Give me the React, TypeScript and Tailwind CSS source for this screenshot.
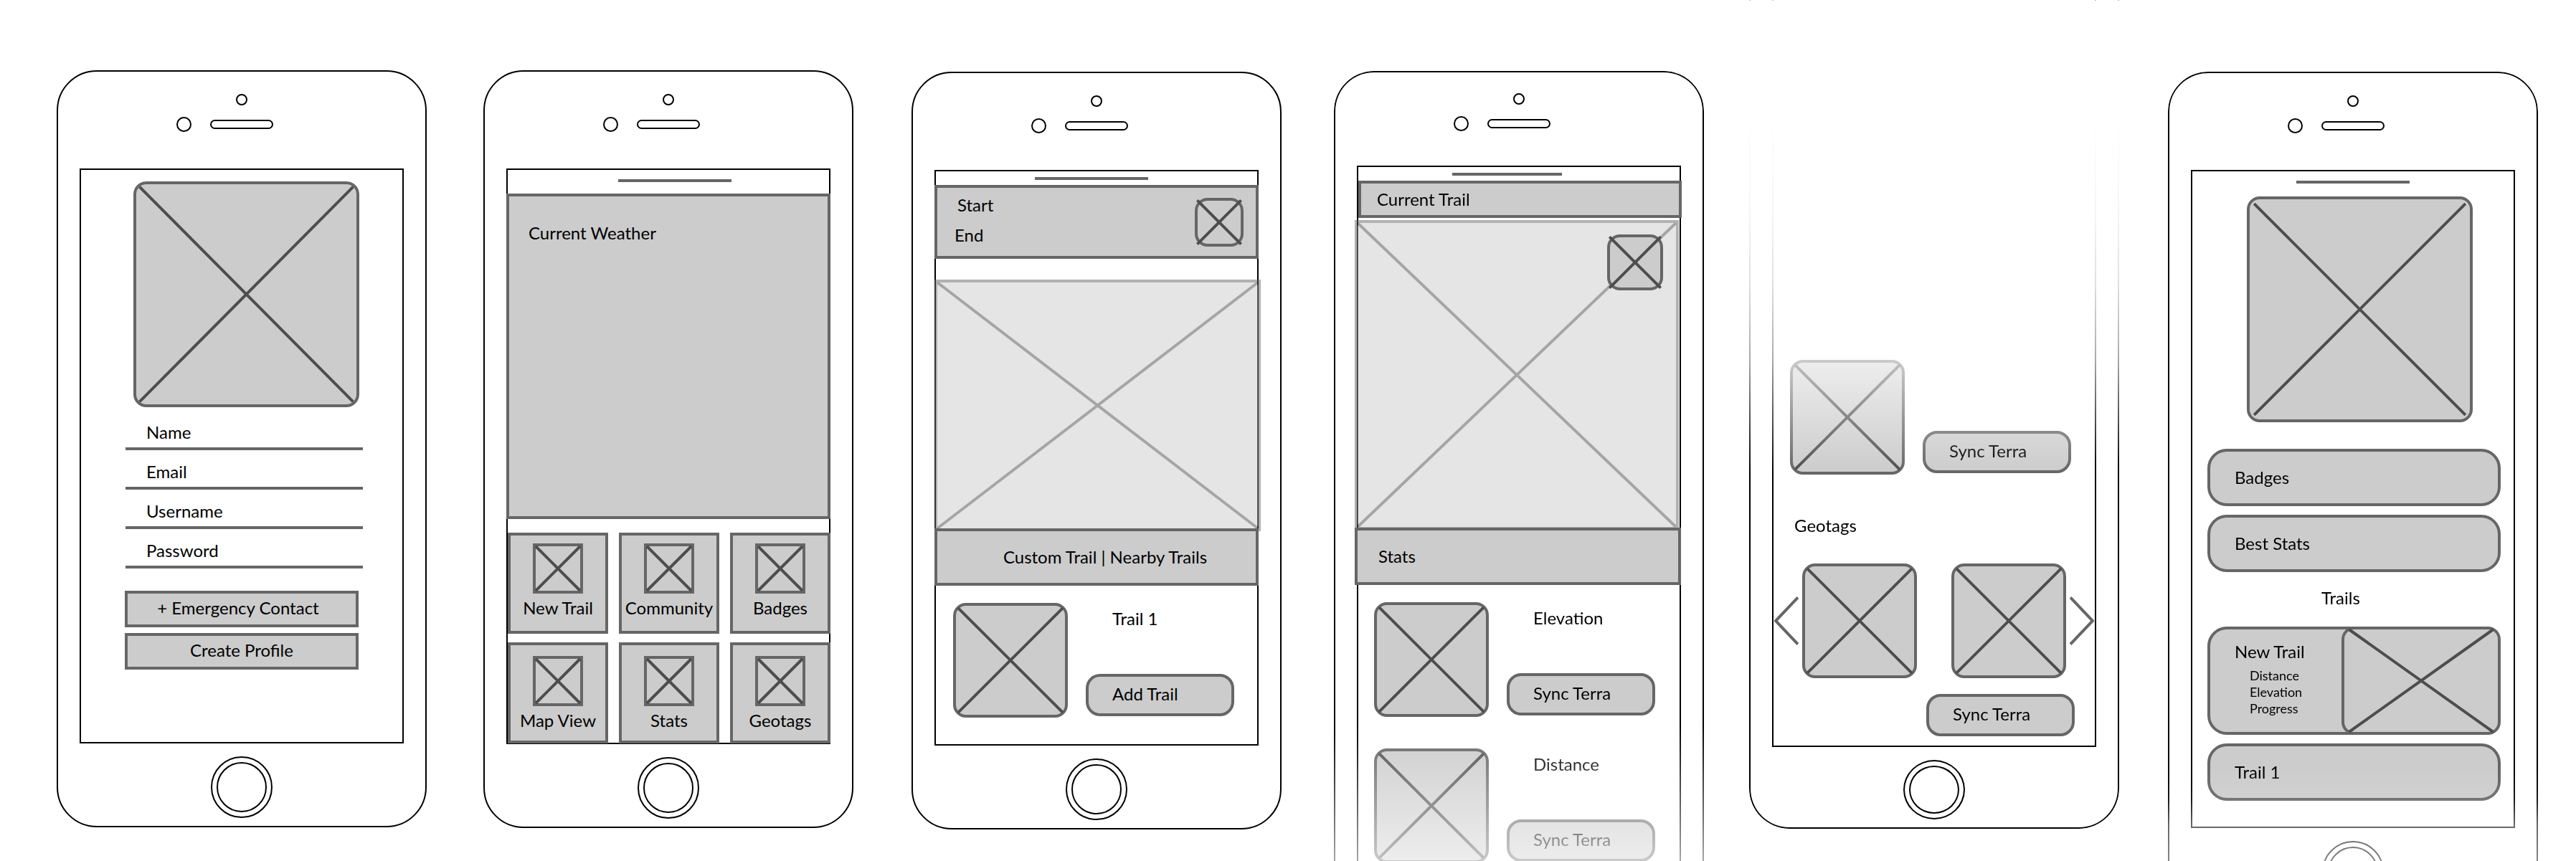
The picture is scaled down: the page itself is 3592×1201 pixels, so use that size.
import type { ReactNode } from "react";

type CrossProps = { dx?: number; dy?: number };

function Cross({ dx = 2, dy = 2 }: CrossProps) {
  return (
    <svg
      className="absolute inset-0 h-full w-full overflow-visible"
      viewBox="0 0 100 100"
      preserveAspectRatio="none"
      fill="none"
      stroke="#4d4d4d"
      strokeWidth="4"
      aria-hidden="true"
    >
      <path vectorEffect="non-scaling-stroke" d={`M${dx} ${dy}L${100 - dx} ${100 - dy}`} />
      <path vectorEffect="non-scaling-stroke" d={`M${100 - dx} ${dy}L${dx} ${100 - dy}`} />
    </svg>
  );
}

function Placeholder({ className, dx, dy }: CrossProps & { className: string }) {
  return (
    <div className={`relative border-4 border-[#666] bg-[#ccc] ${className}`}>
      <Cross dx={dx} dy={dy} />
    </div>
  );
}

function Speaker({ compact = false }: { compact?: boolean }) {
  return (
    <div className={compact ? "pt-[29px] pb-12" : "pt-[31px] pb-[51px]"}>
      <div className="mx-auto size-4 rounded-full border-2 border-black" />
      <div className="mt-4 grid grid-cols-[1fr_88px_1fr] items-center">
        <div className="mr-[26px] size-[21px] justify-self-end rounded-full border-2 border-black" />
        <div className="h-[13px] rounded-full border-2 border-black" />
      </div>
    </div>
  );
}

function HomeButton({ className = "h-[86px]" }: { className?: string }) {
  return (
    <button
      type="button"
      aria-label="Home"
      className={`mx-auto mt-[18px] mb-[11px] block w-[86px] rounded-[50%] border-2 border-black p-[6px] ${className}`}
    >
      <span className="block h-full w-full rounded-[50%] border-2 border-black" />
    </button>
  );
}

function Phone({ className, children }: { className: string; children: ReactNode }) {
  return (
    <section className={`min-w-0 flex-1 border-2 border-black px-[30px] ${className}`}>
      {children}
    </section>
  );
}

function Screen({ className = "", children }: { className?: string; children: ReactNode }) {
  return <div className={`border-2 border-black ${className}`}>{children}</div>;
}

function Handle({ className }: { className: string }) {
  return <div className={`h-1 bg-[#666] ${className}`} />;
}

function PillButton({ className = "", children }: { className?: string; children: ReactNode }) {
  return (
    <button
      type="button"
      className={`flex h-[59px] items-center rounded-[20px] border-4 border-[#666] bg-[#ccc] pb-1 pl-[33px] ${className}`}
    >
      {children}
    </button>
  );
}

function MediaRow({ title, action, className }: { title?: string; action: string; className: string }) {
  return (
    <div className={`flex items-end gap-[25px] ${className}`}>
      <Placeholder className="size-40 shrink-0 rounded-[18px]" />
      <div className="flex h-40 flex-1 flex-col justify-between pt-[6px] pb-[2px]">
        <p className="pl-[37px]">{title}</p>
        <PillButton className="w-full">{action}</PillButton>
      </div>
    </div>
  );
}

function SignUp() {
  return (
    <Phone className="mt-[98px] rounded-[56px]">
      <Speaker />
      <Screen className="pb-[101px]">
        <Placeholder className="mt-4 mr-[60px] ml-[73px] aspect-square rounded-[18px]" dx={1.5} dy={1.2} />
        <form className="mt-[5px]">
          {["Name", "Email", "Username", "Password"].map((field) => (
            <label
              key={field}
              className="mr-[55px] ml-[62px] flex h-[55px] items-center gap-3 border-b-4 border-[#666] pt-[9px] pl-[29px]"
            >
              <span>{field}</span>
              <input
                className="min-w-0 flex-1 outline-none"
                type={field === "Password" ? "password" : "text"}
              />
            </label>
          ))}
          <div className="mx-[61px] mt-[31px] flex flex-col gap-2">
            <button type="button" className="h-[51px] border-4 border-[#666] bg-[#ccc] pr-[10px] pb-1">
              + Emergency Contact
            </button>
            <button type="button" className="h-[51px] border-4 border-[#666] bg-[#ccc] pb-1">
              Create Profile
            </button>
          </div>
        </form>
      </Screen>
      <HomeButton />
    </Phone>
  );
}

function Tile({ label, className }: { label: string; className: string }) {
  return (
    <button
      type="button"
      className={`flex h-[141px] flex-col items-center border-4 border-[#666] bg-[#ccc] ${className}`}
    >
      <Placeholder className="size-[70px]" dx={0} dy={0} />
      <span className="mt-1 whitespace-nowrap">{label}</span>
    </button>
  );
}

function Dashboard() {
  return (
    <Phone className="mt-[98px] ml-[79px] rounded-[56px]">
      <Speaker />
      <Screen>
        <Handle className="mt-[13px] ml-[154px] w-[158px]" />
        <div className="-mx-[2px] mt-4 h-[454px] border-4 border-[#666] bg-[#ccc] pt-[35px] pl-[27px]">
          Current Weather
        </div>
        <div className="mt-[19px] -mr-[2px] -mb-px grid grid-cols-3 gap-x-[15px] gap-y-3">
          {["New Trail", "Community", "Badges"].map((label) => (
            <Tile key={label} label={label} className="pt-[11px]" />
          ))}
          {["Map View", "Stats", "Geotags"].map((label) => (
            <Tile key={label} label={label} className="pt-[15px]" />
          ))}
        </div>
      </Screen>
      <HomeButton />
    </Phone>
  );
}

function TrailPicker() {
  return (
    <Phone className="mt-[100px] ml-[81px] rounded-[56px]">
      <Speaker />
      <Screen className="pb-[37px]">
        <Handle className="mt-2 ml-[138px] w-[158px]" />
        <div className="-mx-[2px] mt-[7px] flex h-[103px] items-start justify-between border-4 border-[#666] bg-[#ccc] pt-2 pr-[17px] pl-6">
          <div className="flex flex-col gap-[10px]">
            <p className="pl-1">Start</p>
            <p>End</p>
          </div>
          <Placeholder className="mt-[6px] size-[68px] rounded-[18px]" dx={-1} dy={-1} />
        </div>
        <Placeholder className="mt-[29px] -mr-[5px] -mb-1 -ml-[2px] h-[351px] opacity-50" dx={0} dy={0} />
        <div className="relative -mx-[2px] flex h-20 items-center justify-center border-4 border-[#666] bg-[#ccc] pl-6 whitespace-pre">
          <button type="button">Custom Trail</button>
          <span> | </span>
          <button type="button">Nearby Trails</button>
        </div>
        <MediaRow title="Trail 1" action="Add Trail" className="mt-6 mr-8 ml-6" />
      </Screen>
      <HomeButton />
    </Phone>
  );
}

function CurrentTrail() {
  return (
    <Phone className="mt-[99px] ml-[73px] rounded-t-[56px] border-b-0 [mask-image:linear-gradient(to_bottom,#000_911px,rgba(0,0,0,0.35)_1102px)]">
      <Speaker compact />
      <Screen className="border-b-0 pb-20">
        <Handle className="mt-2 ml-[131px] w-[153px]" />
        <div className="mt-[7px] -mr-[3px] flex h-[52px] items-center border-4 border-[#666] bg-[#ccc] pl-[22px]">
          Current Trail
        </div>
        <div className="relative mt-[3px] mr-px -mb-[3px] -ml-[5px]">
          <Placeholder className="h-[432px] opacity-50" dx={0} dy={0} />
          <Placeholder className="absolute! top-5 right-[22px] size-[78px] rounded-[18px]" dx={-1} dy={-1} />
        </div>
        <div className="relative -mr-[2px] -ml-[5px] flex h-20 items-center border-4 border-[#666] bg-[#ccc] pl-[29px]">
          Stats
        </div>
        <div className="mt-6 mr-[34px] ml-[22px] flex flex-col gap-11">
          <MediaRow title="Elevation" action="Sync Terra" className="" />
          <MediaRow title="Distance" action="Sync Terra" className="" />
        </div>
      </Screen>
    </Phone>
  );
}

function Chevron({ label, path }: { label: string; path: string }) {
  return (
    <button type="button" aria-label={label}>
      <svg width="34" height="68" viewBox="0 0 34 68" fill="none" stroke="#666" strokeWidth="4" aria-hidden="true">
        <path d={path} />
      </svg>
    </button>
  );
}

function GeotagGallery() {
  return (
    <Phone className="ml-[63px] rounded-b-[56px] border-t-0 [mask-image:linear-gradient(to_bottom,rgba(0,0,0,0.25)_1px,transparent_1px,transparent_160px,rgba(0,0,0,0.04)_300px,rgba(0,0,0,0.13)_400px,rgba(0,0,0,0.34)_503px,#000_660px)]">
      <Screen className="border-t-0 pt-[502px] pb-[13px]">
        <MediaRow action="Sync Terra" className="mr-[33px] ml-[23px]" />
        <p className="mt-[55px] pl-[29px]">Geotags</p>
        <div className="mt-[37px] flex items-center justify-between px-px">
          <Chevron label="Previous geotags" path="M33 1.5L2 34L33 66.5" />
          <div className="flex gap-12">
            <Placeholder className="size-40 rounded-[18px]" />
            <Placeholder className="size-40 rounded-[18px]" />
          </div>
          <Chevron label="Next geotags" path="M1 1.5L32 34L1 66.5" />
        </div>
        <PillButton className="mt-[22px] mr-7 ml-auto w-[207px]">Sync Terra</PillButton>
      </Screen>
      <HomeButton className="h-[83px]" />
    </Phone>
  );
}

function Bar({ children }: { children: ReactNode }) {
  return (
    <button
      type="button"
      className="flex h-20 items-center rounded-[27px] border-4 border-[#666] bg-[#ccc] pl-[34px]"
    >
      {children}
    </button>
  );
}

function Profile() {
  return (
    <Phone className="mt-[100px] ml-[68px] rounded-[56px] [mask-image:linear-gradient(to_bottom,#000_970px,rgba(0,0,0,0.9)_1015px,rgba(0,0,0,0.6)_1050px,rgba(0,0,0,0.48)_1101px)]">
      <Speaker />
      <Screen className="pb-9">
        <Handle className="mt-[13px] ml-[145px] w-[158px]" />
        <Placeholder className="mt-[18px] mr-[57px] ml-[76px] aspect-square rounded-[18px]" dx={2} dy={2} />
        <div className="mt-[37px] mr-[18px] ml-[21px] flex flex-col gap-3">
          <Bar>Badges</Bar>
          <Bar>Best Stats</Bar>
          <h2 className="mt-2 mb-3 ml-[159px]">Trails</h2>
          <article className="flex h-[151px] rounded-[27px] border-4 border-[#666] bg-[#ccc] pt-[15px] pl-[34px]">
            <div className="flex-1">
              <h3>New Trail</h3>
              <ul className="mt-[6px] pl-[21px] text-[18px] leading-[23px]">
                <li>Distance</li>
                <li>Elevation</li>
                <li>Progress</li>
              </ul>
            </div>
            <Placeholder className="-mt-[19px] -mr-1 -mb-1 w-[222px] rounded-[18px]" dx={3} dy={0} />
          </article>
          <Bar>Trail 1</Bar>
        </div>
      </Screen>
      <HomeButton />
    </Phone>
  );
}

export default function App() {
  return (
    <main className="flex h-screen items-start overflow-hidden bg-white pr-[53px] pl-[79px] font-['Lato',sans-serif] text-[24px] leading-8 text-black">
      <SignUp />
      <Dashboard />
      <TrailPicker />
      <CurrentTrail />
      <GeotagGallery />
      <Profile />
    </main>
  );
}
